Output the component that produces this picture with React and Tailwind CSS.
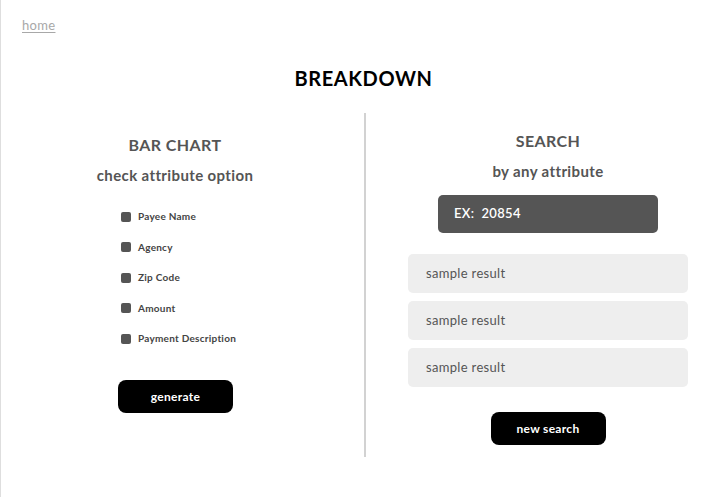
export default function App() {
  const options = ['Payee Name', 'Agency', 'Zip Code', 'Amount', 'Payment Description'];
  const results = ['sample result', 'sample result', 'sample result'];

  return (
    <div className="w-[726px] h-[497px] bg-white border-l border-[#dedede] font-['Lato','Noto_Sans',sans-serif] overflow-hidden">
      <div className="pt-[12px] pl-[21px] h-[60px]">
        <a href="#" className="text-[13px] text-[#a8a8a8] underline underline-offset-2 tracking-wide">home</a>
      </div>

      <h1 className="text-center text-[20px] font-bold tracking-[0.03em] text-black leading-none pt-[8px] h-[53px]">BREAKDOWN</h1>

      <div className="flex">
        {/* Bar chart column */}
        <div className="w-[348px] flex flex-col items-center pt-[24px]">
          <h2 className="text-[16px] font-bold text-[#555] tracking-wide leading-none">BAR CHART</h2>
          <p className="mt-[15px] text-[15px] font-bold text-[#555] tracking-wide leading-none">check attribute option</p>

          <div className="mt-[28px] self-start ml-[120px] flex flex-col gap-[19.5px]">
            {options.map((o) => (
              <label key={o} className="flex items-center gap-[7px] h-[11px]">
                <span className="w-[10px] h-[10px] rounded-[2px] bg-[#555]" />
                <span className="text-[10px] font-bold text-[#444] tracking-wide">{o}</span>
              </label>
            ))}
          </div>

          <button className="mt-[36px] self-start ml-[117px] w-[115px] h-[33px] rounded-[8px] bg-black text-white text-[12px] font-bold tracking-wide">
            generate
          </button>
        </div>

        {/* Divider */}
        <div className="w-[2px] h-[344px] bg-[#d2d2d2] ml-[15px]" />

        {/* Search column */}
        <div className="flex-1 flex flex-col items-center pt-[20px] pl-[4px]">
          <h2 className="text-[16px] font-bold text-[#555] tracking-wide leading-none">SEARCH</h2>
          <p className="mt-[15px] text-[15px] font-bold text-[#555] tracking-wide leading-none">by any attribute</p>

          <div className="mt-[16px] w-[220px] h-[38px] rounded-[5px] bg-[#555] flex items-center pl-[16px] text-white text-[13px] font-semibold tracking-wide">
            EX:&nbsp;&nbsp;20854
          </div>

          <div className="mt-[21px] self-start ml-[38px] flex flex-col gap-[8px]">
            {results.map((r, i) => (
              <div key={i} className="w-[280px] h-[39px] rounded-[5px] bg-[#eeeeee] flex items-center pl-[18px] text-[13px] text-[#555] tracking-wide">
                {r}
              </div>
            ))}
          </div>

          <button className="mt-[25px] w-[115px] h-[33px] rounded-[8px] bg-black text-white text-[12px] font-bold tracking-wide">
            new search
          </button>
        </div>
      </div>
    </div>
  );
}
